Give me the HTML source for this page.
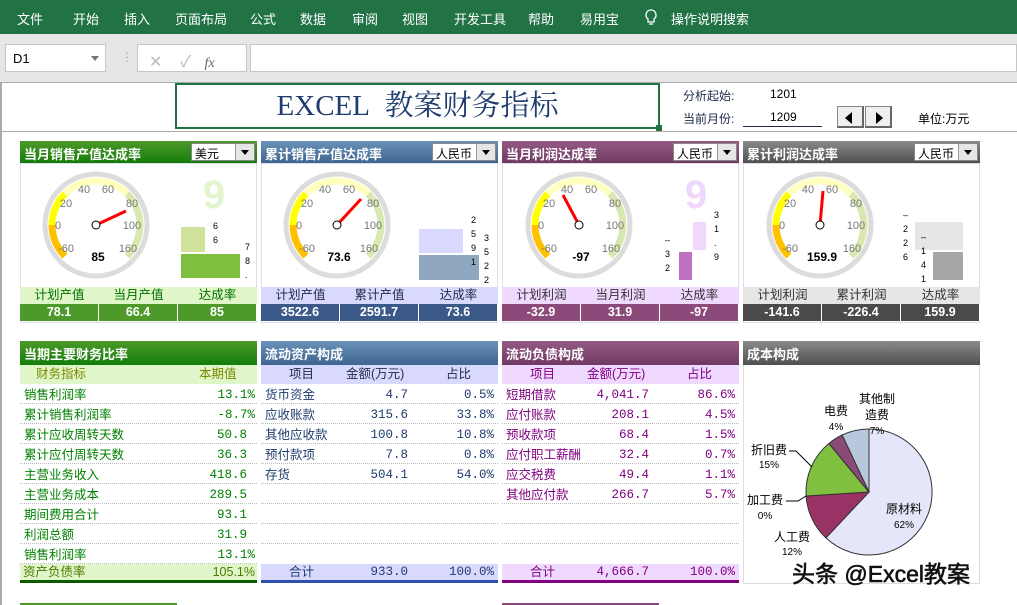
<!DOCTYPE html>
<html><head><meta charset="utf-8"><style>
*{margin:0;padding:0;box-sizing:border-box}
body{width:1017px;height:605px;overflow:hidden;background:#fff;position:relative;font-family:"Liberation Sans","Noto Sans CJK SC",sans-serif;font-size:12px}
.a{position:absolute}
.menu span{position:absolute;top:9px;color:#fff;font-size:13px}
.hd{position:absolute;height:22px;color:#fff;font-weight:bold;font-size:13px;padding:3px 0 0 4px}
.dd{position:absolute;top:2px;right:2px;width:64px;height:18px;background:#fff;border:1px solid #888;color:#000;font-weight:normal;font-size:12px;padding:1px 0 0 3px}
.dd i{position:absolute;right:0;top:0;width:19px;height:16px;background:#e6e6e6;border-left:1px solid #999}
.dd i:after{content:"";position:absolute;left:5px;top:6px;border:4px solid transparent;border-top:5px solid #000}
.lab,.val{position:absolute;height:17px;display:flex}
.lab div,.val div{flex:1;text-align:center;font-size:12.5px;line-height:17px}
.val div{color:#fff;font-weight:bold;border-right:1px solid #fff}
.row{position:absolute;height:20px;border-bottom:1px dotted #bbb;font-size:12.5px;line-height:22px}
.row span{position:absolute}
.num{font-family:"Liberation Mono","Noto Sans CJK SC",monospace}
</style></head><body>
<div class="a" style="left:0;top:0;width:1017px;height:34px;background:#217346"></div>
<div class="menu">
<span style="left:17px">文件</span><span style="left:73px">开始</span><span style="left:124px">插入</span><span style="left:175px">页面布局</span><span style="left:250px">公式</span><span style="left:300px">数据</span><span style="left:352px">审阅</span><span style="left:402px">视图</span><span style="left:454px">开发工具</span><span style="left:528px">帮助</span><span style="left:580px">易用宝</span><span style="left:671px">操作说明搜索</span>
</div>
<svg class="a" style="left:644px;top:8px" width="14" height="20"><path d="M7 2a5 5 0 0 0-3 9v3h6v-3a5 5 0 0 0-3-9zM5 16h4" fill="none" stroke="#fff" stroke-width="1.3"/></svg>
<div class="a" style="left:0;top:34px;width:1017px;height:48px;background:#e6e6e6"></div>
<div class="a" style="left:5px;top:44px;width:101px;height:28px;background:#fff;border:1px solid #c6c6c6;padding:6px 0 0 7px;font-size:13px">D1</div>
<div class="a" style="left:91px;top:56px;border:4px solid transparent;border-top:5px solid #777"></div>
<div class="a" style="left:121px;top:50px;color:#aaa;font-size:12px">⋮</div>
<div class="a" style="left:137px;top:44px;width:110px;height:28px;background:#fff;border:1px solid #c6c6c6;color:#bbb;font-size:16px;padding:3px 0 0 11px">✕&nbsp;&nbsp;&nbsp;&nbsp;✓&nbsp;&nbsp;&nbsp;<i style="color:#666;font-family:'Liberation Serif';font-size:14px">fx</i></div>
<div class="a" style="left:250px;top:44px;width:767px;height:28px;background:#fff;border:1px solid #c6c6c6"></div>
<div class="a" style="left:0;top:82px;width:1017px;height:1px;background:#aaa"></div>
<div class="a" style="left:0;top:82px;width:2px;height:523px;background:#aaa"></div>
<div class="a" style="left:175px;top:83px;width:485px;height:46px;border:2px solid #217346;text-align:center;font-family:'Liberation Serif','Noto Serif CJK SC',serif;font-size:29px;color:#1f3c6e;line-height:42px;padding-left:0px">EXCEL&nbsp; 教案财务指标</div>
<div class="a" style="left:656px;top:125px;width:6px;height:6px;background:#217346"></div>
<div class="a" style="left:683px;top:87px;font-size:12px;color:#1f2a4a">分析起始:</div>
<div class="a" style="left:770px;top:87px;font-size:12px">1201</div>
<div class="a" style="left:683px;top:110px;font-size:12px;color:#1f2a4a">当前月份:</div>
<div class="a" style="left:770px;top:110px;font-size:12px">1209</div>
<div class="a" style="left:743px;top:126px;width:79px;height:1px;background:#1f2a4a"></div>
<div class="a" style="left:837px;top:106px;width:27px;height:22px;background:#f0f0f0;border:1px solid #888;border-right:2px solid #666;border-bottom:2px solid #666"><div class="a" style="left:7px;top:5px;border:6px solid transparent;border-right:7px solid #000;border-left:0"></div></div>
<div class="a" style="left:865px;top:106px;width:27px;height:22px;background:#f0f0f0;border:1px solid #888;border-right:2px solid #666;border-bottom:2px solid #666"><div class="a" style="left:10px;top:5px;border:6px solid transparent;border-left:7px solid #000;border-right:0"></div></div>
<div class="a" style="left:918px;top:110px;font-size:12px">单位:万元</div>
<div class="a" style="left:0;top:131px;width:1017px;height:1px;background:#aaa"></div>

<div class="hd" style="left:20px;top:141px;width:237px;background:linear-gradient(#4d9a2a,#137c0a)">当月销售产值达成率<div class="dd">美元<i></i></div></div>
<div class="hd" style="left:261px;top:141px;width:237px;background:linear-gradient(#6a92b8,#3f6590)">累计销售产值达成率<div class="dd">人民币<i></i></div></div>
<div class="hd" style="left:502px;top:141px;width:237px;background:linear-gradient(#945a85,#6f3a62)">当月利润达成率<div class="dd">人民币<i></i></div></div>
<div class="hd" style="left:743px;top:141px;width:237px;background:linear-gradient(#8a8a8a,#4f4f4f)">累计利润达成率<div class="dd">人民币<i></i></div></div>
<div class="a" style="left:20px;top:163px;width:237px;height:160px;border:1px solid #dde"></div>
<div class="a" style="left:261px;top:163px;width:237px;height:160px;border:1px solid #dde"></div>
<div class="a" style="left:502px;top:163px;width:237px;height:160px;border:1px solid #dde"></div>
<div class="a" style="left:743px;top:163px;width:237px;height:160px;border:1px solid #dde"></div>

<svg class="a" style="left:0;top:163px" width="1017" height="124" font-family="Liberation Sans" font-size="11">
<defs><g id="g">
<circle cx="0" cy="0" r="51" fill="none" stroke="#dcdcdc" stroke-width="5"/>
<path d="M-31.1 31.1A44 44 0 0 1-44 0" fill="none" stroke="#ffc000" stroke-width="7"/>
<path d="M-44 0A44 44 0 0 1-31.1-31.1" fill="none" stroke="#ffff00" stroke-width="7"/>
<path d="M-31.1-31.1A44 44 0 0 1 31.1-31.1" fill="none" stroke="#ffffc0" stroke-width="7"/>
<path d="M31.1-31.1A44 44 0 0 1 31.1 31.1" fill="none" stroke="#d8e8b0" stroke-width="7"/>
<g fill="#777" text-anchor="middle"><text x="-12" y="-32">40</text><text x="12" y="-32">60</text><text x="-30" y="-18">20</text><text x="36" y="-18">80</text><text x="-38" y="4">0</text><text x="36" y="4">100</text><text x="-30" y="27">-60</text><text x="32" y="27">160</text></g>
</g></defs>
<g transform="translate(96,62)"><use href="#g"/><line x1="0" y1="0" x2="30" y2="-14" stroke="red" stroke-width="3"/><circle r="4" fill="#fff" stroke="#000"/><text x="2" y="36" font-weight="bold" font-size="12" text-anchor="middle">85</text></g>
<g transform="translate(337,62)"><use href="#g"/><line x1="0" y1="0" x2="24" y2="-26" stroke="red" stroke-width="3"/><circle r="4" fill="#fff" stroke="#000"/><text x="2" y="36" font-weight="bold" font-size="12" text-anchor="middle">73.6</text></g>
<g transform="translate(579,62)"><use href="#g"/><line x1="0" y1="0" x2="-16" y2="-30" stroke="red" stroke-width="3"/><circle r="4" fill="#fff" stroke="#000"/><text x="2" y="36" font-weight="bold" font-size="12" text-anchor="middle">-97</text></g>
<g transform="translate(820,62)"><use href="#g"/><line x1="0" y1="0" x2="3" y2="-34" stroke="red" stroke-width="3"/><circle r="4" fill="#fff" stroke="#000"/><text x="2" y="36" font-weight="bold" font-size="12" text-anchor="middle">159.9</text></g>
<text x="214" y="45" font-size="40" font-weight="bold" fill="#e3f5cc" text-anchor="middle">9</text>
<rect x="181" y="64" width="24" height="25" fill="#cfe49a"/><rect x="181" y="91" width="59" height="24" fill="#7fbf3f"/>
<g font-size="9" fill="#000"><text x="213" y="66">6</text><text x="213" y="80">6</text><text x="245" y="87">7</text><text x="245" y="101">8</text><text x="245" y="115">.</text></g>
<rect x="419" y="66" width="44" height="24" fill="#d9d9ff"/><rect x="419" y="92" width="60" height="25" fill="#8fa8c0"/>
<g font-size="9"><text x="471" y="60">2</text><text x="471" y="74">5</text><text x="471" y="88">9</text><text x="471" y="102">1</text><text x="484" y="78">3</text><text x="484" y="92">5</text><text x="484" y="106">2</text><text x="484" y="120">2</text></g>
<text x="696" y="45" font-size="40" font-weight="bold" fill="#efd8fb" text-anchor="middle">9</text>
<rect x="693" y="59" width="13" height="28" fill="#efd8fb"/><rect x="679" y="89" width="13" height="28" fill="#c070c0"/>
<g font-size="9"><text x="714" y="55">3</text><text x="714" y="69">1</text><text x="714" y="83">.</text><text x="714" y="97">9</text><text x="665" y="80">–</text><text x="665" y="94">3</text><text x="665" y="108">2</text></g>
<rect x="915" y="59" width="48" height="28" fill="#e6e6e6"/><rect x="933" y="89" width="30" height="28" fill="#a6a6a6"/>
<g font-size="9"><text x="903" y="55">–</text><text x="903" y="69">2</text><text x="903" y="83">2</text><text x="903" y="97">6</text><text x="921" y="77">–</text><text x="921" y="91">1</text><text x="921" y="105">4</text><text x="921" y="119">1</text></g>
</svg>

<div class="lab" style="left:20px;top:287px;width:237px;background:#e0f5c8;color:#007000"><div>计划产值</div><div>当月产值</div><div>达成率</div></div>
<div class="val" style="left:20px;top:304px;width:237px;background:#4d9a2a"><div>78.1</div><div>66.4</div><div>85</div></div>
<div class="lab" style="left:261px;top:287px;width:237px;background:#d9d9ff;color:#1f2a4a"><div>计划产值</div><div>累计产值</div><div>达成率</div></div>
<div class="val" style="left:261px;top:304px;width:237px;background:#3a5888"><div>3522.6</div><div>2591.7</div><div>73.6</div></div>
<div class="lab" style="left:502px;top:287px;width:237px;background:#f0d9ff;color:#333"><div>计划利润</div><div>当月利润</div><div>达成率</div></div>
<div class="val" style="left:502px;top:304px;width:237px;background:#8b4a7a"><div>-32.9</div><div>31.9</div><div>-97</div></div>
<div class="lab" style="left:743px;top:287px;width:237px;background:#e6e6e6;color:#333"><div>计划利润</div><div>累计利润</div><div>达成率</div></div>
<div class="val" style="left:743px;top:304px;width:237px;background:#4a4a4a"><div>-141.6</div><div>-226.4</div><div>159.9</div></div>

<div class="hd" style="left:20px;top:341px;width:237px;height:24px;background:linear-gradient(#4d9a2a,#137c0a)">当期主要财务比率</div>
<div class="hd" style="left:261px;top:341px;width:237px;height:24px;background:linear-gradient(#6a92b8,#3f6590)">流动资产构成</div>
<div class="hd" style="left:502px;top:341px;width:237px;height:24px;background:linear-gradient(#945a85,#6f3a62)">流动负债构成</div>
<div class="hd" style="left:743px;top:341px;width:237px;height:24px;background:linear-gradient(#8a8a8a,#4f4f4f)">成本构成</div>

<div class="a" style="left:20px;top:365px;width:237px;height:19px;background:#e0f5c8;color:#7a8a00;font-size:12.5px;line-height:19px"><span class="a" style="left:16px">财务指标</span><span class="a" style="left:179px">本期值</span></div>
<div class="a" style="left:261px;top:365px;width:237px;height:19px;background:#d9d9ff;color:#1f2a4a;font-size:12.5px;line-height:19px"><span class="a" style="left:28px">项目</span><span class="a" style="left:85px">金额(万元)</span><span class="a" style="left:185px">占比</span></div>
<div class="a" style="left:502px;top:365px;width:237px;height:19px;background:#f0d9ff;color:#800080;font-size:12.5px;line-height:19px"><span class="a" style="left:28px">项目</span><span class="a" style="left:85px">金额(万元)</span><span class="a" style="left:185px">占比</span></div>

<div style="color:#008000">
<div class="row" style="left:20px;top:384px;width:237px"><span style="left:4px">销售利润率</span><span class="num" style="right:2px">13.1%</span></div>
<div class="row" style="left:20px;top:404px;width:237px"><span style="left:4px">累计销售利润率</span><span class="num" style="right:2px">-8.7%</span></div>
<div class="row" style="left:20px;top:424px;width:237px"><span style="left:4px">累计应收周转天数</span><span class="num" style="right:10px">50.8</span></div>
<div class="row" style="left:20px;top:444px;width:237px"><span style="left:4px">累计应付周转天数</span><span class="num" style="right:10px">36.3</span></div>
<div class="row" style="left:20px;top:464px;width:237px"><span style="left:4px">主营业务收入</span><span class="num" style="right:10px">418.6</span></div>
<div class="row" style="left:20px;top:484px;width:237px"><span style="left:4px">主营业务成本</span><span class="num" style="right:10px">289.5</span></div>
<div class="row" style="left:20px;top:504px;width:237px"><span style="left:4px">期间费用合计</span><span class="num" style="right:10px">93.1</span></div>
<div class="row" style="left:20px;top:524px;width:237px"><span style="left:4px">利润总额</span><span class="num" style="right:10px">31.9</span></div>
<div class="row" style="left:20px;top:544px;width:237px"><span style="left:4px">销售利润率</span><span class="num" style="right:2px">13.1%</span></div>
</div>
<div class="a" style="left:20px;top:564px;width:237px;height:19px;background:#e0f5c8;border-bottom:3px solid #0a5a00;color:#4a7a00;font-size:12.5px;line-height:17px"><span class="a" style="left:3px">资产负债率</span><span class="a" style="right:2px">105.1%</span></div>

<div style="color:#1f3c6e">
<div class="row" style="left:261px;top:384px;width:237px"><span style="left:4px">货币资金</span><span class="num" style="right:90px">4.7</span><span class="num" style="right:4px">0.5%</span></div>
<div class="row" style="left:261px;top:404px;width:237px"><span style="left:4px">应收账款</span><span class="num" style="right:90px">315.6</span><span class="num" style="right:4px">33.8%</span></div>
<div class="row" style="left:261px;top:424px;width:237px"><span style="left:4px">其他应收款</span><span class="num" style="right:90px">100.8</span><span class="num" style="right:4px">10.8%</span></div>
<div class="row" style="left:261px;top:444px;width:237px"><span style="left:4px">预付款项</span><span class="num" style="right:90px">7.8</span><span class="num" style="right:4px">0.8%</span></div>
<div class="row" style="left:261px;top:464px;width:237px"><span style="left:4px">存货</span><span class="num" style="right:90px">504.1</span><span class="num" style="right:4px">54.0%</span></div>
<div class="row" style="left:261px;top:484px;width:237px"></div><div class="row" style="left:261px;top:504px;width:237px"></div><div class="row" style="left:261px;top:524px;width:237px"></div>
</div>
<div class="a" style="left:261px;top:564px;width:237px;height:19px;background:#d9d9ff;border-bottom:3px solid #3050b0;color:#1f3c6e;font-size:12.5px;line-height:17px"><span class="a" style="left:28px">合计</span><span class="a num" style="right:90px">933.0</span><span class="a num" style="right:4px">100.0%</span></div>

<div style="color:#800080">
<div class="row" style="left:502px;top:384px;width:237px"><span style="left:4px">短期借款</span><span class="num" style="right:90px">4,041.7</span><span class="num" style="right:4px">86.6%</span></div>
<div class="row" style="left:502px;top:404px;width:237px"><span style="left:4px">应付账款</span><span class="num" style="right:90px">208.1</span><span class="num" style="right:4px">4.5%</span></div>
<div class="row" style="left:502px;top:424px;width:237px"><span style="left:4px">预收款项</span><span class="num" style="right:90px">68.4</span><span class="num" style="right:4px">1.5%</span></div>
<div class="row" style="left:502px;top:444px;width:237px"><span style="left:4px">应付职工薪酬</span><span class="num" style="right:90px">32.4</span><span class="num" style="right:4px">0.7%</span></div>
<div class="row" style="left:502px;top:464px;width:237px"><span style="left:4px">应交税费</span><span class="num" style="right:90px">49.4</span><span class="num" style="right:4px">1.1%</span></div>
<div class="row" style="left:502px;top:484px;width:237px"><span style="left:4px">其他应付款</span><span class="num" style="right:90px">266.7</span><span class="num" style="right:4px">5.7%</span></div>
<div class="row" style="left:502px;top:504px;width:237px"></div><div class="row" style="left:502px;top:524px;width:237px"></div>
</div>
<div class="a" style="left:502px;top:564px;width:237px;height:19px;background:#f0d9ff;border-bottom:3px solid #800080;color:#800080;font-size:12.5px;line-height:17px"><span class="a" style="left:28px">合计</span><span class="a num" style="right:90px">4,666.7</span><span class="a num" style="right:4px">100.0%</span></div>

<div class="a" style="left:743px;top:365px;width:237px;height:219px;border:1px solid #ddd;border-top:0"></div>
<svg class="a" style="left:0;top:0" width="1017" height="605" font-family="Liberation Sans,Noto Sans CJK SC" font-size="12">
<path d="M869 492L869 429A63 63 0 1 1 825.9 537.9Z" fill="#e6e6fa" stroke="#333"/>
<path d="M869 492L825.9 537.9A63 63 0 0 1 806.1 496Z" fill="#993366" stroke="#333"/>
<path d="M869 492L806.1 496A63 63 0 0 1 828.9 443.5Z" fill="#80c040" stroke="#333"/>
<path d="M869 492L828.9 443.5A63 63 0 0 1 842.2 435Z" fill="#8b4a7a" stroke="#333"/>
<path d="M869 492L842.2 435A63 63 0 0 1 869 429Z" fill="#b8c8dc" stroke="#333"/>
<g stroke="#000" fill="none"><path d="M789 451H796L812 467"/><path d="M786 501H798L806 496"/></g>
<g text-anchor="middle"><text x="904" y="513">原材料</text><text x="904" y="528" font-size="10">62%</text>
<text x="792" y="541">人工费</text><text x="792" y="555" font-size="10">12%</text>
<text x="765" y="504">加工费</text><text x="765" y="519" font-size="10">0%</text>
<text x="769" y="454">折旧费</text><text x="769" y="468" font-size="10">15%</text>
<text x="836" y="415">电费</text><text x="836" y="430" font-size="10">4%</text>
<text x="877" y="403">其他制</text><text x="877" y="419">造费</text><text x="877" y="434" font-size="10">7%</text></g>
<text x="792" y="582" font-size="23" fill="#111" stroke="#111" stroke-width="0.6">头条 @Excel教案</text>
</svg>
<div class="a" style="left:20px;top:603px;width:157px;height:2px;background:#4d9a2a"></div>
<div class="a" style="left:502px;top:603px;width:157px;height:2px;background:#8b4a7a"></div>
</body></html>
